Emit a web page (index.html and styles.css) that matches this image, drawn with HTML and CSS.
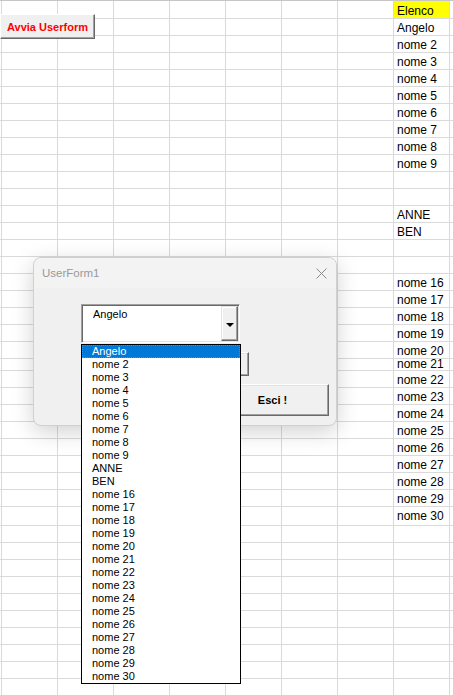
FILE: index.html
```html
<!DOCTYPE html>
<html lang="it">
<head>
    <meta charset="UTF-8" />
    <meta name="viewport" content="width=device-width, initial-scale=1" />
    <title>Elenco - UserForm</title>
    <link rel="stylesheet" href="styles.css">
</head>
<body>
    <div class="sheet">
        <div class="row first"><span class="cell head">Elenco</span></div>
        <div class="row"><span class="cell">Angelo</span></div>
        <div class="row"><span class="cell">nome 2</span></div>
        <div class="row"><span class="cell">nome 3</span></div>
        <div class="row"><span class="cell">nome 4</span></div>
        <div class="row"><span class="cell">nome 5</span></div>
        <div class="row"><span class="cell">nome 6</span></div>
        <div class="row"><span class="cell">nome 7</span></div>
        <div class="row"><span class="cell">nome 8</span></div>
        <div class="row"><span class="cell">nome 9</span></div>
        <div class="row"></div>
        <div class="row"></div>
        <div class="row"><span class="cell">ANNE</span></div>
        <div class="row"><span class="cell">BEN</span></div>
        <div class="row"></div>
        <div class="row"></div>
        <div class="row"><span class="cell">nome 16</span></div>
        <div class="row"><span class="cell">nome 17</span></div>
        <div class="row"><span class="cell">nome 18</span></div>
        <div class="row"><span class="cell">nome 19</span></div>
        <div class="row"><span class="cell">nome 20</span></div>
        <div class="row short"><span class="cell">nome 21</span></div>
        <div class="row"><span class="cell">nome 22</span></div>
        <div class="row"><span class="cell">nome 23</span></div>
        <div class="row"><span class="cell">nome 24</span></div>
        <div class="row"><span class="cell">nome 25</span></div>
        <div class="row"><span class="cell">nome 26</span></div>
        <div class="row"><span class="cell">nome 27</span></div>
        <div class="row"><span class="cell">nome 28</span></div>
        <div class="row"><span class="cell">nome 29</span></div>
        <div class="row tall"><span class="cell">nome 30</span></div>
        <div class="row"></div>
        <div class="row"></div>
        <div class="row"></div>
        <div class="row"></div>
        <div class="row"></div>
        <div class="row"></div>
        <div class="row"></div>
        <div class="row"></div>
        <div class="row"></div>
        <div class="row"></div>
    </div>

    <button class="launch">Avvia Userform</button>

    <div class="dialog">
        <div class="titlebar">
            <span class="title">UserForm1</span>
            <svg class="close" width="11" height="11" viewBox="0 0 11 11">
                <path d="M0.5 0.5 L10.5 10.5 M10.5 0.5 L0.5 10.5" stroke="#8a8a8a" stroke-width="1" fill="none" />
            </svg>
        </div>
        <div class="form-body">
            <div class="combo-wrap">
                <div class="combo">
                    <span class="combo-text">Angelo</span>
                    <span class="combo-btn"><span class="arrow"></span></span>
                </div>
                <ul class="list">
                    <li class="sel">Angelo</li>
                    <li>nome 2</li>
                    <li>nome 3</li>
                    <li>nome 4</li>
                    <li>nome 5</li>
                    <li>nome 6</li>
                    <li>nome 7</li>
                    <li>nome 8</li>
                    <li>nome 9</li>
                    <li>ANNE</li>
                    <li>BEN</li>
                    <li>nome 16</li>
                    <li>nome 17</li>
                    <li>nome 18</li>
                    <li>nome 19</li>
                    <li>nome 20</li>
                    <li>nome 21</li>
                    <li>nome 22</li>
                    <li>nome 23</li>
                    <li>nome 24</li>
                    <li>nome 25</li>
                    <li>nome 26</li>
                    <li>nome 27</li>
                    <li>nome 28</li>
                    <li>nome 29</li>
                    <li>nome 30</li>
                </ul>
            </div>
            <button class="btn btn-ok">OK</button>
            <button class="btn btn-exit">Esci !</button>
        </div>
    </div>
</body>
</html>
```

FILE: styles.css
```css
body {
    margin: 0;
    background: #fff;
    font-family: "Liberation Sans", Arial, sans-serif;
    overflow: hidden;
}
.sheet {
    border-top: 1px solid #c6c6c6;
    height: 694px;
    background-image: repeating-linear-gradient(to right, #dadada 0 1px, transparent 1px 56px);
    background-position: 1px 0;
}
.row {
    height: 16px;
    border-bottom: 1px solid #dadada;
    padding-left: 394px;
    display: flex;
}
.row.first {
    height: 17px;
}
.row.short {
    height: 11px;
}
.row.tall {
    height: 18px;
}
.cell {
    width: 55px;
    padding: 1px 0 0 3px;
    box-sizing: border-box;
    font-size: 12px;
    line-height: 16px;
    color: #000;
    white-space: nowrap;
}
.row.first .cell {
    line-height: 17px;
    padding-top: 2px;
}
.row.short .cell {
    line-height: 11px;
    padding-top: 0;
}
.row.tall .cell {
    line-height: 18px;
    padding-top: 0;
}
.cell.head {
    background: #ffff00;
}

.launch {
    position: absolute;
    left: 0;
    top: 14px;
    width: 95px;
    height: 25px;
    margin: 0;
    padding: 0;
    background: #f0f0f0;
    border: 1px solid;
    border-color: #fff #696969 #696969 #fff;
    box-shadow: inset -1px -1px 0 #a0a0a0;
    color: #ff0000;
    font-family: "Liberation Sans", Arial, sans-serif;
    font-weight: bold;
    font-size: 11px;
    text-align: center;
}

.dialog {
    position: absolute;
    left: 33px;
    top: 257px;
    width: 302px;
    height: 167px;
    border: 1px solid #d0d0d0;
    border-radius: 8px;
    background: #f0f0f0;
    box-shadow: 0 6px 22px rgba(0, 0, 0, 0.18);
}
.titlebar {
    height: 30px;
    display: flex;
    align-items: center;
    justify-content: space-between;
    padding: 0 9px 0 8px;
    background: #f3f3f3;
    border-radius: 8px 8px 0 0;
}
.title {
    font-size: 11.5px;
    color: #999;
}
.form-body {
    padding: 16px 0 0 47px;
}
.combo-wrap {
    position: relative;
    width: 159px;
}
.combo {
    display: flex;
    height: 39px;
    box-sizing: border-box;
    background: #fff;
    border: 1px solid;
    border-color: #a0a0a0 #fff #fff #a0a0a0;
    box-shadow: inset 1px 1px 0 #696969, inset -1px -1px 0 #e3e3e3;
    padding: 1px;
}
.combo-text {
    flex: 1;
    font-size: 11px;
    line-height: 13px;
    padding: 2px 0 0 10px;
    color: #000;
}
.combo-btn {
    width: 17px;
    box-sizing: border-box;
    background: #f0f0f0;
    border: 1px solid;
    border-color: #e3e3e3 #696969 #696969 #e3e3e3;
    box-shadow: inset -1px -1px 0 #a0a0a0, inset 1px 1px 0 #fff;
    display: flex;
    align-items: center;
    justify-content: center;
}
.arrow {
    width: 0;
    height: 0;
    border-left: 4px solid transparent;
    border-right: 4px solid transparent;
    border-top: 4px solid #000;
    margin-top: 2px;
}
.list {
    position: absolute;
    left: 0;
    top: 40px;
    width: 160px;
    box-sizing: border-box;
    margin: 0;
    padding: 0;
    list-style: none;
    background: #fff;
    border: 1px solid #000;
    z-index: 2;
}
.list li {
    height: 13px;
    line-height: 13px;
    font-size: 11px;
    padding-left: 10px;
    color: #000;
    white-space: nowrap;
}
.list li.sel {
    background: #0078d7;
    color: #fff;
    box-sizing: border-box;
    border: 1px dotted #d07000;
    padding-left: 9px;
    line-height: 11px;
}
.btn {
    display: block;
    margin: 0;
    padding: 0;
    background: #f0f0f0;
    border: 1px solid;
    border-color: #fff #696969 #696969 #fff;
    box-shadow: inset -1px -1px 0 #a0a0a0, inset 1px 1px 0 #e3e3e3;
    font-family: "Liberation Sans", Arial, sans-serif;
    font-weight: bold;
    font-size: 11px;
    color: #000;
}
.btn-ok {
    margin: 9px 0 0 50px;
    width: 118px;
    height: 24px;
}
.btn-exit {
    margin: 8px 0 0 135px;
    width: 113px;
    height: 32px;
}
```
